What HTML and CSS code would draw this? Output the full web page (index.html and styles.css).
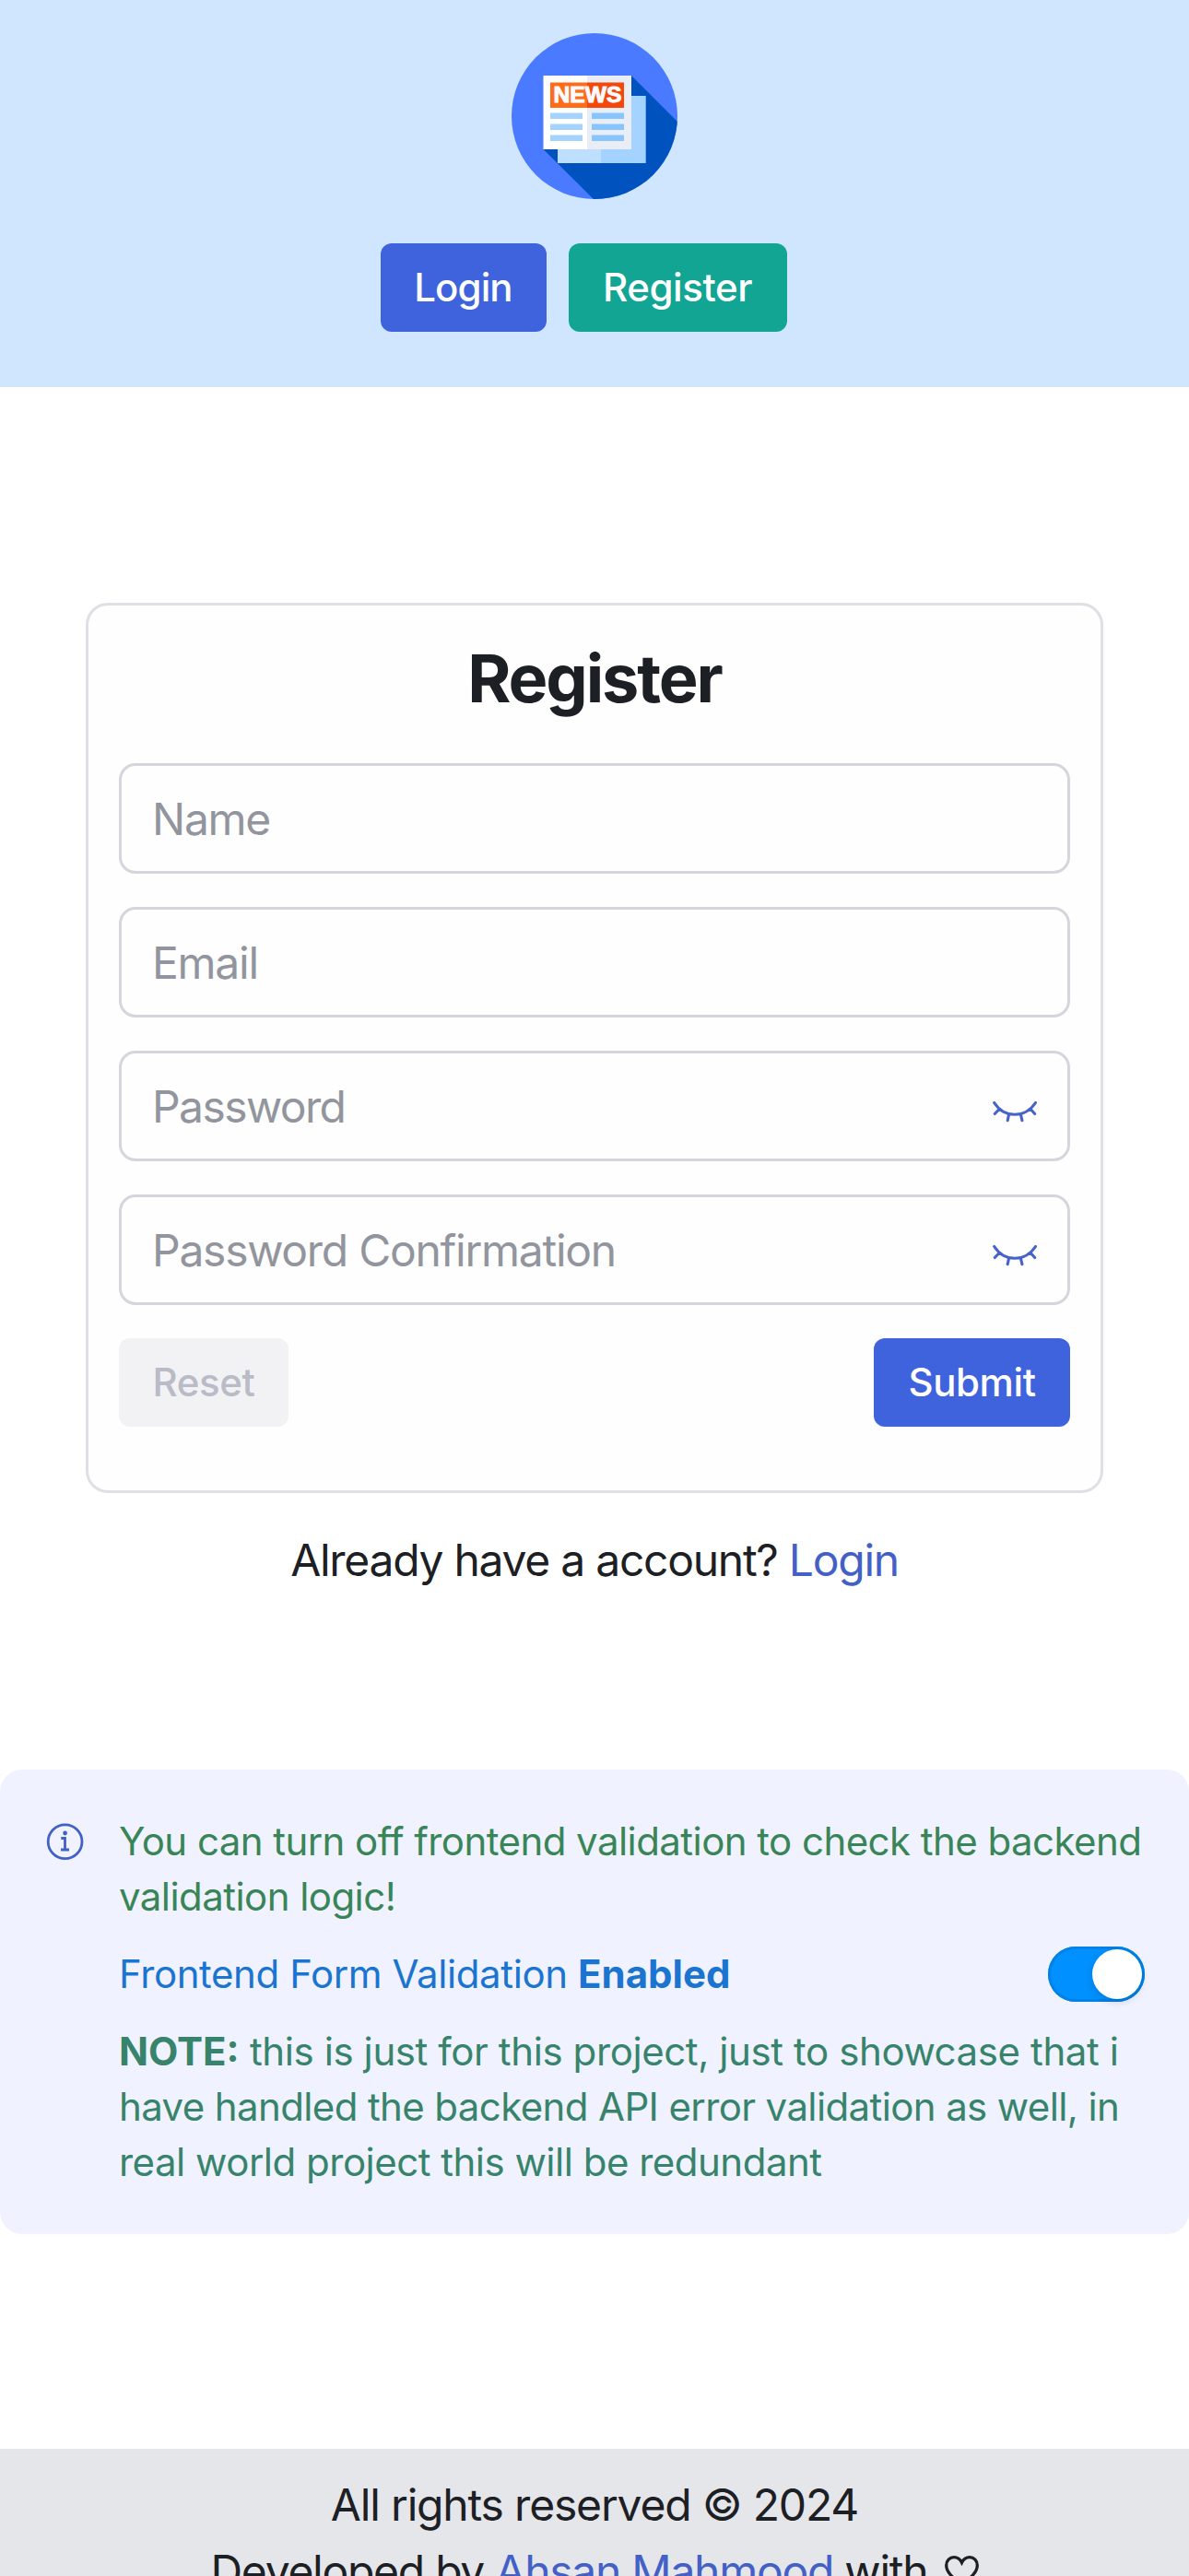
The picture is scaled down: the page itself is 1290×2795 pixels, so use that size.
FILE: index.html
```html
<!DOCTYPE html>
<html lang="en">
<head>
<meta charset="utf-8">
<meta name="viewport" content="width=device-width, initial-scale=1">
<title>Register</title>
<link rel="stylesheet" href="styles.css">
</head>
<body>
<header class="header">
  <svg class="logo" viewBox="0 0 180 180" role="img" aria-label="News">
    <defs><clipPath id="disc"><circle cx="90" cy="90" r="90"/></clipPath></defs>
    <g clip-path="url(#disc)">
      <rect width="180" height="180" fill="#4a7aff"/>
      <path d="M130 46L190 106V190H99L34.500 126Z" fill="#0053bf"/>
    </g>
    <path d="M50 68H97V141H50Z" fill="#bfdfff"/>
    <path d="M97 68H145.700V141H97Z" fill="#a4d3ff"/>
    <path d="M34.500 46H82V126H34.500Z" fill="#fff"/>
    <path d="M82 46H130V126H82Z" fill="#e9edf5"/>
    <path d="M42 53.500H82V81H42Z" fill="#ff6c16"/>
    <path d="M82 53.500H122V81H82Z" fill="#f54709"/>
    <path d="M42 86.500H77V93H42ZM42 98.500H77V105H42ZM42 110.500H77V117H42Z" fill="#a4d3ff"/>
    <path d="M87 86.500H122V93H87ZM87 98.500H122V105H87ZM87 110.500H122V117H87Z" fill="#88c5ff"/>
    <text x="45.500" y="75.300" class="logo-text" textLength="74" lengthAdjust="spacingAndGlyphs">NEWS</text>
  </svg>
  <nav class="nav">
    <a class="btn btn-primary btn-login">Login</a>
    <a class="btn btn-teal btn-register">Register</a>
  </nav>
</header>

<main>
  <section class="card">
    <h1 class="title">Register</h1>
    <form class="form">
      <div class="field"><span>Name</span></div>
      <div class="field"><span>Email</span></div>
      <div class="field">
        <span class="field-password">Password</span>
        <svg class="eye" viewBox="0 0 48 48"><path d="M1.700 20.500Q10 33.300 24 33.300T46.500 20.500M7.300 27.300L2.300 32.500M17.500 33.500L16.200 39.700M30.500 33.500L31.900 39.700M41 27.300L45.700 32.500"/></svg>
      </div>
      <div class="field">
        <span>Password Confirmation</span>
        <svg class="eye" viewBox="0 0 48 48"><path d="M1.700 20.500Q10 33.300 24 33.300T46.500 20.500M7.300 27.300L2.300 32.500M17.500 33.500L16.200 39.700M30.500 33.500L31.900 39.700M41 27.300L45.700 32.500"/></svg>
      </div>
      <div class="actions">
        <span class="btn btn-disabled">Reset</span>
        <span class="btn btn-primary btn-submit">Submit</span>
      </div>
    </form>
  </section>
  <p class="already">Already have a account? <a class="link">Login</a></p>

  <aside class="alert">
    <svg class="info" viewBox="0 0 45 42"><circle cx="22.600" cy="21.200" r="18.400"/><path d="M18.300 17.500H22.500V29.500M18 30H27"/><circle class="dot" cx="22.600" cy="12" r="2.400"/></svg>
    <div class="alert-body">
      <p class="green">You can turn off frontend validation to check the backend<br>validation logic!</p>
      <div class="toggle-row">
        <span>Frontend Form Validation <b>Enabled</b></span>
        <span class="switch"><span class="knob"></span></span>
      </div>
      <p class="note"><b>NOTE:</b> <span class="note-lead">this is just for this project, just to showcase that i</span><br><span class="note-middle">have handled the backend API error validation as well, in</span><br>real world project this will be redundant</p>
    </div>
  </aside>
</main>

<footer class="footer">
  <p class="rights">All rights reserved © 2024</p>
  <p>Developed by <a class="link">Ahsan Mahmood</a> with <svg class="heart" viewBox="0 0 37 34"><path d="M18.500 31.500C10 24.500 1.700 18.500 1.700 10.500C1.700 5.300 5.300 1.700 10 1.700C14 1.700 16.800 4 18.500 7.500C20.200 4 23 1.700 27 1.700C31.700 1.700 35.300 5.300 35.300 10.500C35.300 18.500 27 24.500 18.500 31.500Z"/></svg></p>
</footer>
</body>
</html>
```
FILE: styles.css
```css
* { box-sizing: border-box; margin: 0; }

body {
  height: 2795px;
  overflow: hidden;
  background: #fff;
  color: #1c2024;
  font: 400 48px/72px Inter, "Liberation Sans", sans-serif;
  letter-spacing: -1.27px;
  white-space: nowrap;
}

.header {
  height: 420px;
  padding-top: 36px;
  background: #d0e6ff;
  display: flex;
  flex-direction: column;
  align-items: center;
}

.logo { width: 180px; height: 180px; display: block; }
.logo-text {
  font: 700 23px "Liberation Sans", sans-serif;
  letter-spacing: 0;
  fill: #fbfbff;
  stroke: #fbfbff;
  stroke-width: 1;
}

.nav {
  margin: 48px 24px 0 0;
  display: flex;
  gap: 24px;
}

.btn {
  height: 96px;
  width: 180px;
  border-radius: 12px;
  display: flex;
  align-items: center;
  justify-content: center;
  font-size: 42px;
  font-weight: 500;
  line-height: 60px;
  letter-spacing: -.4px;
}
.btn-primary { background: #3e63dd; color: #fff; }
.btn-teal { background: #12a594; color: #fff; }
.btn-login { letter-spacing: -.9px; }
.btn-register { width: 237px; }
.btn-disabled { width: 184px; background: #f2f2f5; color: #b9bbc6; }
.btn-submit { width: 213px; }

.card {
  width: 1104px;
  height: 966px;
  margin: 234px auto 0;
  padding: 43px 33px 0;
  border: 3px solid #dfdfe6;
  border-radius: 24px;
  background: #fefefe;
}
.title {
  text-align: center;
  font-size: 72px;
  font-weight: 700;
  line-height: 72px;
  letter-spacing: -2.1px;
}
.form { margin-top: 56px; display: grid; gap: 36px; }

.field {
  height: 120px;
  padding: 0 33px;
  border: 3px solid #d5d6dd;
  border-radius: 18px;
  display: flex;
  align-items: center;
  justify-content: space-between;
  color: #92959d;
}
.field span { padding-top: 2px; }
.field-password { letter-spacing: -1.6px; }
.eye { width: 48px; height: 48px; fill: none; stroke: #4763cb; stroke-width: 3.1; stroke-linecap: round; }
.actions { display: flex; justify-content: space-between; }

.already { margin-top: 37px; text-align: center; }
.link { color: #4360c6; }

.alert {
  height: 504px;
  margin-top: 191px;
  padding: 48px;
  border-radius: 24px;
  background: #f0f3ff;
  display: flex;
  gap: 36px;
  font-size: 42px;
  line-height: 60px;
  letter-spacing: -.56px;
}
.alert b { letter-spacing: 0; }
.info { width: 45px; height: 42px; margin-top: 9px; fill: none; stroke: #4360c6; stroke-width: 2.8; flex: none; }
.info .dot { fill: #4360c6; stroke: none; }
.alert-body { flex: 1; min-width: 0; }
.green { color: #398557; }
.toggle-row {
  height: 60px;
  margin: 24px 0;
  display: flex;
  justify-content: space-between;
  color: #1b74d0;
  letter-spacing: -.4px;
}
.note { color: #37836b; letter-spacing: -.5px; }
.note-lead { letter-spacing: -.4px; }
.note-middle { letter-spacing: -.62px; }
.switch {
  width: 105px;
  height: 60px;
  padding: 3px;
  border-radius: 30px;
  background: #0090ff;
  box-shadow: inset 0 0 0 3px #0082e6;
  display: flex;
  justify-content: flex-end;
}
.knob { width: 54px; height: 54px; border-radius: 50%; background: #fff; box-shadow: 0 3px 9px rgba(0, 0, 0, .15); }

.footer {
  height: 200px;
  margin-top: 233px;
  padding-top: 25px;
  background: #e5e6ea;
  text-align: center;
}
.rights { letter-spacing: -1.18px; }
.heart { width: 37px; height: 34px; margin-left: 6px; fill: none; stroke: #1c2024; stroke-width: 3.3; }
```
